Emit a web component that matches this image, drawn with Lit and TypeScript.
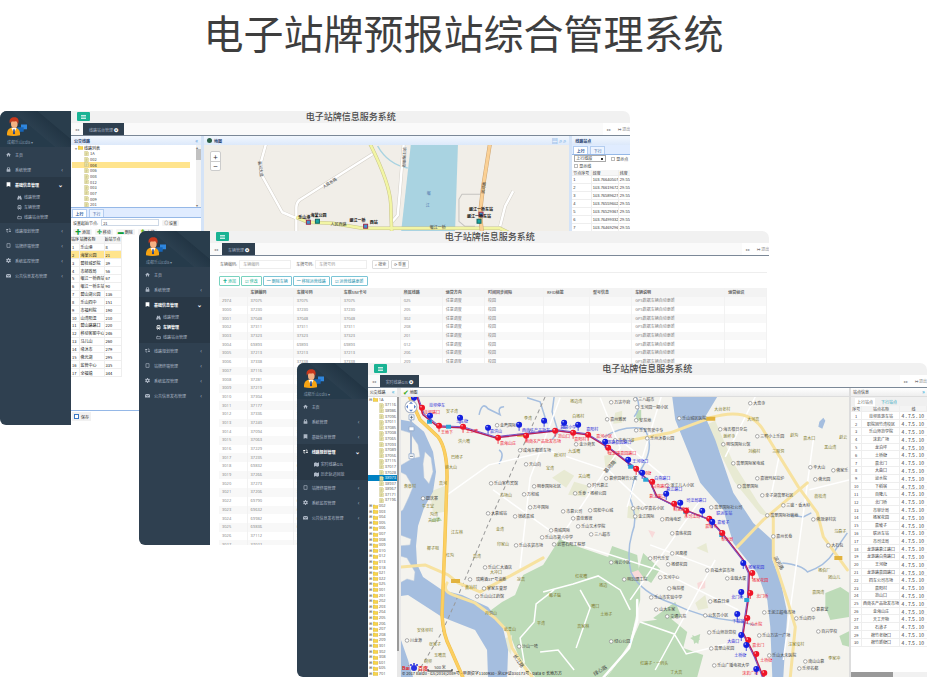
import { LitElement, html, svg, css } from "lit";
import { customElement, property } from "lit/decorators.js";
import { classMap } from "lit/directives/class-map.js";

const base = css`
  * { box-sizing: border-box; }
  button, input, select { font: inherit; color: inherit; margin: 0; padding: 0; border: 0; background: none; min-width: 0; }
  table { border-collapse: collapse; table-layout: fixed; }
  th, td { padding: 0; font-weight: 400; overflow: hidden; white-space: nowrap; line-height: 1; }
  a { color: inherit; text-decoration: none; }
  ul { list-style: none; margin: 0; padding: 0; }
  svg { display: block; }
`;

/* ---------- icons ---------- */
const shapes: Record<string, unknown> = {
  home: svg`<path d="M1 8 8 2l7 6-1.500 1.500L13 9v5H9.500v-4h-3v4H3V9l-.5.5z"/>`,
  lock: svg`<path fill-rule="evenodd" d="M3 7V5a5 4.500 0 0 1 10 0v2h1v8H2V7zm2.500 0h5V5a2.500 2.500 0 0 0-5 0z"/>`,
  book: svg`<path fill-rule="evenodd" d="M2 1h12v14l-6-2-6 2z"/>`,
  route: svg`<path d="M1 3h6v3H4v2L0 5zM15 13H9v-3h3V8l4 3z"/><path d="M3 7v6h4M13 9V3H9" fill="none" stroke="currentColor" stroke-width="2"/>`,
  screen: svg`<path fill="none" stroke="currentColor" stroke-width="2" d="M3 2h10v12H3z"/>`,
  gear: svg`<path fill-rule="evenodd" d="M6.500 0h3l.5 2.500 2 1 2.200-1 1.500 2.500-1.700 1.700v2.600l1.700 1.700-1.500 2.500-2.200-1-2 1-.5 2.500h-3L6 13.500l-2-1-2.200 1L.3 11 2 9.300V6.700L.3 5l1.500-2.500 2.200 1 2-1zM8 5.500a2.500 2.500 0 1 0 0 5 2.500 2.500 0 0 0 0-5z"/>`,
  mail: svg`<path d="M0 3h16l-8 6zM0 5l8 6 8-6v9H0z"/>`,
  road: svg`<path d="M4 2h3v3h2V2h3l4 12H9v-4H7v4H0z"/>`,
  bus: svg`<path fill-rule="evenodd" d="M4 1h8l2 3v9h-2v2h-2v-2H6v2H4v-2H2V4zm0 3v4h8V4zm0 6v2h2v-2zm6 0v2h2v-2z"/>`,
  sign: svg`<path fill="none" stroke="currentColor" stroke-width="2" d="M2 5h12v7H2zM5 5V2"/>`,
  map: svg`<path d="M0 3l5-2 6 2 5-2v12l-5 2-6-2-5 2z"/>`,
};
const icon = (n: string) => html`<svg class="ico" viewBox="0 0 16 16" fill="currentColor" aria-hidden="true">${shapes[n]}</svg>`;

const avatar = html`<svg class="avatar" viewBox="0 0 60 56" aria-hidden="true">
  <path d="M42 22h18v14H50l-4 4v-4h-4z" fill="#2f86dd"/><path d="M31 30h19v14H40l-5 5v-5h-4z" fill="#1765b8"/>
  <path d="M0 54c-1-16 8-22 16-22h8c9 0 16 8 15 22-12 3-28 3-39 0z" fill="#f7a413"/>
  <path d="M13 32l8 16 8-16z" fill="#fff"/><path d="M19 36h4l1 12-3 4-3-4z" fill="#26468a"/>
  <ellipse cx="22" cy="20" rx="10" ry="13" fill="#f5b183"/>
  <path d="M9 20C4 5 14 0 22 0c11 0 16 8 11 21-1-6-3-8-7-9-6 2-10 0-12 1-3 1-4 4-5 7z" fill="#c9381c"/></svg>`;

/* ---------- window frame with side navigation ---------- */
type Item = { icon: string; label: string; children?: [string, string][] };
const groups: Item[] = [
  { icon: "home", label: "主页" },
  { icon: "lock", label: "系统管理" },
  { icon: "book", label: "基础信息管理", children: [["road", "线路管理"], ["bus", "车辆管理"], ["sign", "线路站台管理"]] },
  { icon: "route", label: "线路规划管理", children: [["map", "实时线路GIS"], ["map", "历史轨迹回放"]] },
  { icon: "screen", label: "站牌终端管理" },
  { icon: "gear", label: "系统监控管理" },
  { icon: "mail", label: "公共信息发布管理" },
];

@customElement("admin-window")
export class AdminWindow extends LitElement {
  @property() tab = "";
  @property() group = "";
  @property() current = "";

  static styles = [base, css`
    :host { display: flex; overflow: hidden; border-radius: 7px 7px 0 6px; background: #fff; color: #333; font: 4px/1 "Noto Sans CJK SC", sans-serif; }
    nav { flex: none; width: 71px; background: #2f4050; color: #acb6c4; }
    .profile { height: 36px; padding: 6px 7px 0; background: linear-gradient(40deg, #263b4b 48%, #2b3f4f 49%, #223544 70%, #293d4c 71%); }
    .avatar { width: 20px; height: 19px; }
    .profile p { margin: 4px 0 0; color: #8296aa; white-space: nowrap; }
    .ico { width: 5px; height: 5px; flex: none; }
    .entry { display: flex; align-items: center; gap: 4px; height: 15px; padding: 0 8px 0 6px; white-space: nowrap; }
    .entry .arrow { margin-left: auto; font-size: 6px; }
    .open { background: #293846; padding-bottom: 1px; }
    .open > .entry { color: #fff; font-weight: 700; }
    .sub a { display: flex; align-items: center; gap: 2px; height: 10px; padding-left: 17px; white-space: nowrap; }
    .sub a.on { color: #fff; font-weight: 700; }
    main { flex: 1; min-width: 0; display: flex; flex-direction: column; }
    header { flex: none; height: 12px; display: grid; grid-template-columns: 1fr auto 1fr; background: #f1f1f1; }
    .menu { width: 13px; height: 9px; margin: 1px 0 0 6px; background: #1ab394; border-radius: 1px; display: grid; place-items: center; color: #fff; }
    .menu svg { width: 5px; height: 4px; }
    h2 { margin: 0; font-size: 9px; line-height: 11px; font-weight: 500; color: #4b4b4b; }
    .tabs { flex: none; height: 13px; display: flex; background: #fafafa; border-bottom: 1px solid #7b8897; color: #888; }
    .tabs button { padding: 0 4px; }
    .tabs .active { background: #2f4050; color: #a7b1c2; padding: 0 6px; white-space: nowrap; }
    .tabs b { color: #fff; font-size: 5px; }
    .tabs .next { margin-left: auto; background: #fff; }
    .tabs .exit { width: 15px; background: #fff; white-space: nowrap; overflow: hidden; padding: 0 0 0 3px; text-align: left; }
    .body { flex: 1; min-height: 0; display: flex; }
    ::slotted(*) { flex: 1; min-width: 0; }
  `];

  render() {
    return html`
      <nav>
        <div class="profile">${avatar}<p>成都乐山cdls ▾</p></div>
        <ul>${groups.map((g) => {
          const open = g.label === this.group;
          return html`<li class=${classMap({ open })}>
            <a class="entry" href="#">${icon(g.icon)}<span>${g.label}</span>${g.icon === "home" ? "" : html`<span class="arrow">${open ? "⌄" : "‹"}</span>`}</a>
            ${open ? html`<ul class="sub">${g.children!.map(([i, l]) => html`<li><a href="#" class=${classMap({ on: l === this.current })}>${icon(i)}${l}</a></li>`)}</ul>` : ""}
          </li>`;
        })}</ul>
      </nav>
      <main>
        <header>
          <button class="menu" aria-label="菜单"><svg viewBox="0 0 10 8"><path d="M0 1h10M0 4h10M0 7h10" stroke="#fff" stroke-width="1.500"/></svg></button>
          <h2>电子站牌信息服务系统</h2>
        </header>
        <div class="tabs">
          <button aria-label="上一个">◂◂</button><button class="active">${this.tab} <b>✪</b></button>
          <button class="next" aria-label="下一个">▸▸</button><button class="exit">↦ 退出</button>
        </div>
        <div class="body"><slot></slot></div>
      </main>`;
  }
}

/* ---------- small map helpers ---------- */
type Label = [number, number, string];
const labels = (cls: string, list: Label[]) => list.map(([x, y, t]) => svg`<text class=${cls} x=${x} y=${y}>${t}</text>`);

/* ---------- stop management ---------- */
const stops: [string, number][] = [["乐山港", 8], ["海棠公园", 21], ["碧桂城影院", 39], ["市邮政局", 56], ["岷江一桥西站", 67], ["岷江一桥东站", 90], ["碧山湖公园", 136], ["乐山四中", 151], ["市福利院", 190], ["山湾阳温", 210], ["碧山路路口", 220], ["移动客服中心", 246], ["马儿山", 260], ["缘沐市", 279], ["佛光湖", 295], ["监管中心", 335], ["全福镇", 344]];
const points = ["103.76640507", "103.76619672", "103.76589627", "103.76559602", "103.76529367", "103.76499332", "103.76469296"];
const leaf = svg`<path d="M2 1h9l3 3v11H2z" fill="#f0ecb4" stroke="#a99c50"/><path d="M5 6h6M5 9h6M5 12h4" stroke="#8c8346"/>`;
const folder = svg`<path d="M0 3h6l2 2h8v9H0z" fill="#f8d64e" stroke="#c9a02c"/>`;

@customElement("stop-editor")
export class StopEditor extends LitElement {
  static styles = [base, css`
    :host { display: grid; grid-template-columns: 130px 1fr 58px; gap: 3px; background: #d4e3f7; }
    section { min-width: 0; min-height: 0; display: flex; flex-direction: column; background: #fff; overflow: hidden; }
    h3 { flex: none; margin: 0; height: 9px; padding: 0 3px; display: flex; align-items: center; gap: 2px; background: linear-gradient(#f2f7fe, #dce9fa); font-size: 4px; font-weight: 700; color: #24406c; }
    h3 .end { margin-left: auto; color: #4f95d8; font-weight: 400; font-size: 6px; }
    .globe { width: 5px; height: 5px; border-radius: 50%; background: #2a6048; }
    .treebox { flex: none; height: 63px; display: flex; border-bottom: 1px solid #95b8e7; }
    .tree { flex: 1; display: flex; flex-direction: column; }
    .tree li { flex: 1; min-height: 0; display: flex; align-items: center; gap: 1px; margin: 0 6px 0 1px; padding-left: 12px; color: #444; }
    .tree li:first-child { padding-left: 3px; color: #222; }
    .tree li.on { background: #ffe48d; color: #222; }
    .tree svg { width: 5px; height: 5px; }
    .bar { width: 5px; background: #f1f1f1; font-size: 4px; display: flex; flex-direction: column; justify-content: space-between; color: #777; }
    .thumb { height: 11px; background: #c1c1c1; margin-bottom: auto; }
    .tabs { flex: none; height: 10px; padding: 1px 1px 0; display: flex; gap: 2px; background: #e0ecff; border-bottom: 1px solid #95b8e7; }
    .tabs button { width: 15px; border: 1px solid #b3cdf0; border-bottom: 0; background: #edf4ff; color: #2a5b9a; line-height: 1; }
    .tabs .on { background: #fff; font-weight: 700; }
    .line { flex: none; height: 9px; display: flex; align-items: center; gap: 3px; padding: 0 2px; white-space: nowrap; }
    .line input { width: 58px; height: 7px; border: 1px solid #cdd8e6; padding: 0 1px; }
    .line button { background: #f4f4f4; border-radius: 1px; padding: 1px 2px; }
    .line b { font-size: 6px; line-height: 4px; }
    .line .g { color: #0e9c38; }
    .line .r { color: #6bbd27; }
    .stops { flex: none; width: 50px; height: 141px; text-align: left; color: #111; }
    .stops th, .stops td { border: 1px solid #eee; border-width: 0 1px 1px 0; padding-left: 1px; }
    .stops th { background: #f6f6f6; padding: 0; }
    .stops tr.on { background: #ffe48d; }
    .save { margin-top: auto; flex: none; height: 15px; border-top: 1px solid #95b8e7; padding: 1px 1px; }
    .save button { height: 9px; padding: 0 2px; background: #f1f1f1; display: flex; align-items: center; gap: 2px; }
    .save i { width: 5px; height: 5px; background: #fff; border: 1px solid #3a78c6; }
    .map { position: relative; flex: 1; min-height: 0; }
    .map svg { width: 100%; height: 100%; background: #f1eee8; }
    .zoom { position: absolute; left: 6px; top: 6px; display: grid; width: 11px; border: 1px solid #ccc; border-radius: 2px; background: #fff; }
    .zoom button { height: 9px; line-height: 8px; font-size: 8px; }
    .zoom button + button { border-top: 1px solid #ccc; }
    text { font-size: 4px; fill: #333; text-anchor: middle; }
    text.s { font-weight: 700; fill: #111; }
    text.v { fill: #4d6faa; }
    .checks { flex: none; height: 15px; display: flex; flex-wrap: wrap; align-items: center; gap: 0 5px; padding-left: 2px; overflow: hidden; }
    .checks select { appearance: none; width: 32px; height: 7px; border: 1px solid #aaa; padding-left: 1px; line-height: 5px; background: linear-gradient(#333 0 0) 26px 2px / 2px 2px no-repeat; }
    .checks label { display: flex; align-items: center; gap: 1px; height: 7px; white-space: nowrap; }
    .checks input { appearance: none; width: 4px; height: 4px; border: 1px solid #bbb; }
    .pts { flex: none; width: 70px; height: 62px; text-align: left; }
    .pts th, .pts td { border-right: 1px solid #eee; border-bottom: 1px solid #eee; padding-left: 1px; }
    .pts td { font: 4px "Liberation Sans", sans-serif; }
    .pts th { background: #f6f6f6; }
  `];

  render() {
    return html`
      <section>
        <h3>公交线路<span class="end">«</span></h3>
        <div class="treebox">
          <ul class="tree">
            <li>▿<svg viewBox="0 0 16 16">${folder}</svg>线路列表</li>
            ${["1A", "002", "004", "006", "008", "012", "003", "007", "009", "201"].map((t) => html`<li class=${classMap({ on: t === "004" })}><svg viewBox="0 0 16 16">${leaf}</svg>${t}</li>`)}
          </ul>
          <div class="bar"><span>▴</span><span class="thumb"></span><span>▾</span></div>
        </div>
        <div class="tabs"><button class="on">上行</button><button>下行</button></div>
        <div class="line"><label for="node">设置起始节点:</label><input id="node" value="21"><button>◎ 设置</button></div>
        <div class="line"><button><b class="g">✚</b> 添加</button><button><b class="g">✢</b> 移动</button><button><b class="g">▬</b> 删除</button><button><b class="r">⬆</b> 上移</button></div>
        <table class="stops">
          <colgroup><col width="8"><col width="25"><col width="17"></colgroup>
          <tr><th>站序</th><th>站牌名称</th><th>始站节点</th></tr>
          ${stops.map(([n, v], i) => html`<tr class=${classMap({ on: i === 1 })}><td>${i + 1}</td><td>${n}</td><td>${v}</td></tr>`)}
        </table>
        <div class="save"><button><i></i>保存</button></div>
      </section>
      <section>
        <h3><span class="globe"></span>地图<span class="end">▤ ⌕ ⌕</span></h3>
        <div class="map">
          <svg viewBox="205 145 364 280" preserveAspectRatio="xMidYMin slice">
            <path d="M411 145h47l-3 90h-54z" fill="#a9d3e1"/>
            <path d="M378 146q10 18 30 22" fill="none" stroke="#a9d3e1" stroke-width="1.500"/>
            <g fill="none" stroke-linejoin="round">
              <path stroke="#d4d0c9" stroke-width="3.500" d="M267 143l-5 18v13l21 38 14 6M373 154l-73 46q-3 3-3 7v28M404 143l-4 50-2 22-6 7M513 191l-8 15-5 20"/>
              <path stroke="#fff" stroke-width="2.500" d="M267 143l-5 18v13l21 38 14 6M373 154l-73 46q-3 3-3 7v28M404 143l-4 50-2 22-6 7M513 191l-8 15-5 20"/>
              <path stroke="#c5c3c0" d="M482 194h-20l-3 5v22l6 5h10"/>
              <path stroke="#c8c48b" stroke-width="3.500" d="M370 143q20 40 21 60l1 30M297 217l12 5 24 1 30 5h137l12 6"/>
              <path stroke="#f2f5a4" stroke-width="2.500" d="M370 143q20 40 21 60l1 30M297 217l12 5 24 1 30 5h137l12 6"/>
              <path stroke="#cda574" stroke-width="4" d="M490 143l-7 44-3 26 2 20"/><path stroke="#fad095" stroke-width="3" d="M490 143l-7 44-3 26 2 20"/>
            </g>
            <g stroke="#9b3050"><path fill="#3c94d2" d="M307 220h4v4h-4zM364 224h4v4h-4zM479 212h4v4h-4z"/></g>
            <path fill="#17a3a0" stroke="#176862" d="M316 219h4v4h-4zM477 219h4v4h-4z"/>
            ${labels("s", [[305, 219, "乐山港"], [319, 217, "海棠公园"], [358, 222, "岷江一桥"], [374, 224, "西站"], [481, 211, "岷江一桥东站"], [479, 218, "岷江一桥东站"]])}
            ${labels("", [[339, 226, "人民西路"], [438, 229, "岷江一桥"]])}
            <text transform="translate(331 184) rotate(-32)">人民东路</text><text transform="translate(260 169) rotate(82)">嘉州大道</text><text transform="translate(403 157) rotate(93)">滨江路南段</text><text transform="translate(485 188) rotate(-82)">滨河路</text>
            ${labels("v", [[429, 195, "岷"], [428, 207, "江"]])}
          </svg>
          <div class="zoom"><button aria-label="放大">+</button><button aria-label="缩小">−</button></div>
        </div>
      </section>
      <section>
        <h3>线路站点</h3>
        <div class="tabs"><button class="on">上行</button><button>下行</button></div>
        <div class="checks"><select aria-label="线段"><option>上行线段</option></select><label><input type="checkbox">显示点</label><label><input type="checkbox">显示线</label></div>
        <table class="pts">
          <colgroup><col width="19"><col width="27"><col width="24"></colgroup>
          <tr><th>节点序号</th><th>经度</th><th>纬度</th></tr>
          ${points.map((p, i) => html`<tr><td>${i + 1}</td><td>${p}</td><td>29.55</td></tr>`)}
        </table>
      </section>`;
  }
}

/* ---------- vehicle list ---------- */
const codes = "37075 37230 37048 37311 37323 69893 37213 37338 37116 37281 37219 37304 37177 37336 37240 37094 37063 37229 37235 69832 37266 37273 37206 69790 69632 69982 69836 37112 37022".split(" ");
const routes = "025 205 302 208 201 012 206 209".split(" ");
const cols: [string, number][] = [["", 28], ["车辆编码", 46], ["车牌号码", 47], ["车载SIM卡号", 60], ["所属线路", 42], ["运营方向", 42], ["时间同步间隔", 59], ["RFID标签", 46], ["型号信息", 42], ["车辆说明", 93], ["运营标识", 42]];

@customElement("vehicle-list")
export class VehicleList extends LitElement {
  static styles = [base, css`
    :host { display: flex; flex-direction: column; padding: 0 2px 0 9px; color: #808080; overflow: hidden; }
    form { flex: none; height: 17px; display: flex; align-items: center; gap: 2px; padding: 0 1px; border-bottom: 1px solid #eee; color: #666; white-space: nowrap; }
    form input { width: 52px; height: 9px; border: 1px solid #eee; padding: 0 3px; margin-right: 3px; }
    form input::placeholder { color: #999; }
    form button { height: 9px; padding: 0 2px; border: 1px solid #ddd; border-radius: 1px; }
    .actions { flex: none; height: 15px; padding: 3px 0 2px; display: flex; gap: 1px; }
    .actions button { padding: 0 3px; border: 1px solid #7bc5d6; border-radius: 1px; color: #2492ae; white-space: nowrap; line-height: 1; }
    .actions .add { border-color: #79d2bf; color: #1ab394; }
    table { flex: none; width: 100%; height: 261px; text-align: left; font: 4px/1 "Open Sans", "Noto Sans CJK SC", sans-serif; }
    th, td { padding-left: 3px; border: 1px solid #f2f2f2; border-width: 0 1px 0 0; }
    thead tr { background: #f3f3f3; }
    thead th { height: 9px; font-weight: 600; color: #666; }
    tbody tr:nth-child(odd) { background: #f8f8f8; }
    tbody tr:nth-child(even) { background: #fff; }
  `];

  render() {
    return html`
      <form>
        <label for="code">车辆编码:</label><input id="code" placeholder="车辆编码">
        <label for="plate">车牌号码:</label><input id="plate" placeholder="车牌号码">
        <button type="button">⌕ 搜索</button><button type="button">⟳ 重置</button>
      </form>
      <div class="actions"><button class="add">✚ 添加</button><button class="add">☑ 修改</button><button>━ 删除车辆</button><button>━ 移除运营线路</button><button>☑ 运营线路更新</button></div>
      <table>
        <colgroup>${cols.map(([, w]) => html`<col width=${w}>`)}</colgroup>
        <thead><tr>${cols.map(([c]) => html`<th>${c}</th>`)}</tr></thead>
        <tbody>${codes.map((c, i) => html`<tr><td>${i ? 2999 + i : 2974}</td><td>${c}</td><td>${c}</td><td>${c}</td><td>${routes[i % 8]}</td><td>任意调度</td><td>校园</td><td></td><td></td><td>GPS数据车辆自动更新</td><td></td></tr>`)}</tbody>
      </table>`;
  }
}

/* ---------- realtime GIS ---------- */
const busIds = "37116 38986 37096 37011 37085 37008 37065 37093 37089 37056 37115 37017 37028 38973 38937 38967 37171 37196".split(" ");
const lines = "002 003 004 005 006 007 008 009 010 012 013 018 021 022 025 001 201 202 203 204 205 206 207 208 209 301 302 308 601 605 701".split(" ");
const stations = "肖坝旅游车站 职院旭竹湾校区 乐山师范学院 沫若广场 龙泊坪 土桥街 嘉北门 大曲口 泌水院 下稻宿 百隆儿 北门桥 市审计局 杨家花园 嘉坡子 联运车站 市司法局 龙游路慕江路口 龙游路白燕路口 王河街 龙游路嘉园路口 四车公司市场 嘉阳村 范山口 西南农产品批发市场 金海山庄 天工开物 石道子 棉竹老街口 棉竹新街口".split(" ");
const blue = [[414, 398], [430, 416], [460, 418], [488, 428], [519, 425], [544, 421], [564, 423], [578, 425], [605, 442], [628, 460], [642, 473], [666, 494], [680, 503], [702, 511], [712, 522], [743, 563], [741, 592], [737, 614], [741, 635], [746, 645], [756, 669]];
const red = [[422, 408], [439, 426], [463, 427], [498, 438], [526, 436], [555, 431], [573, 433], [588, 435], [608, 448], [636, 469], [652, 482], [674, 504], [686, 511], [709, 519], [722, 533], [752, 573], [750, 593], [747, 618], [748, 640], [756, 654], [764, 673]];
const villages: Label[] = [[452, 413, "安子湾"], [464, 443, "洪六嘴"], [457, 459, "巴椅子"], [451, 469, "熊大山"], [410, 488, "詹蔡村"], [443, 485, "高河"], [428, 508, "牛王堂"], [434, 516, "沟湾"], [434, 522, "关山子"], [457, 534, "江左林"], [500, 531, "金湾"], [433, 550, "椰子咀"], [450, 557, "红沟"], [477, 558, "高湾"], [503, 546, "印家山"], [496, 574, "大冲口"], [521, 581, "凉高"], [471, 589, "黄冶村"], [491, 615, "月洞山"], [510, 631, "武善山"], [425, 632, "安体坝村"], [435, 646, "张家子"], [440, 657, "玉嘴高"], [428, 663, "胡坝"], [576, 403, "杨边湾"], [528, 420, "李湾"], [578, 418, "白杨村"], [574, 453, "九溪嘴"], [560, 457, "棉河村"], [550, 470, "宝湾"], [584, 478, "关山嘴"], [506, 497, "马场山"], [581, 578, "红花嘴"], [603, 587, "杨边"], [555, 597, "甄子脑"], [595, 608, "嘴口"], [606, 616, "土地子"], [583, 628, "高家林"], [541, 625, "平湾"], [654, 665, "红路子·一码头"], [676, 674, "丁大高"], [722, 411, "大台老村"], [753, 421, "大河高"], [729, 438, "谢杯寺"], [754, 453, "刘稿村"], [778, 453, "三眼洞"], [794, 437, "赵沟"], [809, 440, "嘉木口"], [830, 449, "黑山湾"], [820, 498, "荔枝湾"], [840, 533, "乌森子"], [824, 572, "杨伯厂"], [834, 579, "团山儿"], [818, 594, "嘉国湾"], [796, 646, "汪家坟村"], [834, 660, "李家冲"], [843, 439, "赵云"]];
const places: Label[] = [[432, 500, "圆庆寨"], [508, 427, "金鹰国际"], [622, 404, "万达华府"], [646, 401, "三八超市"], [654, 409, "玉河园一期小区"], [618, 421, "嘉州雅居"], [645, 422, "安苑地"], [694, 420, "乐山城区医院"], [651, 432, "乐安驾驶中专"], [662, 440, "乐州沐春公园"], [626, 442, "市泰门诊"], [587, 446, "金沙商务"], [537, 452, "成海东都新车场"], [535, 466, "天山向"], [506, 485, "乐山客竹宾馆"], [549, 488, "明泰国际社区"], [600, 487, "时代慕江"], [623, 480, "慕修园餐饮公寓"], [533, 496, "万和城"], [592, 495, "乐泰·杨柳公园"], [541, 509, "万年国际"], [574, 513, "市慕公司"], [603, 512, "瑞松中心城"], [499, 515, "大慕城站"], [526, 518, "锦绣嘉城"], [584, 520, "嘉佳雅锦"], [650, 510, "中心学嘉名小区"], [646, 518, "金江国际"], [682, 487, "湛江儿人小区"], [593, 528, "乐山艺术学院"], [562, 532, "燕城国际"], [602, 536, "三八超市"], [559, 539, "乐山市第六中学"], [571, 546, "武警石阳工程部"], [673, 521, "四海电影"], [683, 535, "嘉练花园"], [681, 555, "凤凰楼"], [661, 560, "时代乐安"], [622, 564, "海云小区"], [679, 566, "杨健花园"], [671, 579, "艺河中心"], [637, 581, "明玩理工院"], [722, 572, "百福虎贸市场"], [738, 580, "金融大厦"], [678, 590, "梅苑楼"], [668, 599, "乐山市实验中学"], [667, 611, "山大东家"], [678, 618, "交通兴苑"], [721, 603, "杨森日港"], [718, 617, "公务员小区"], [724, 634, "乐山师范党校"], [724, 650, "翡翠山花园"], [733, 667, "乐山广播电视大学"], [776, 637, "乐山万达一广场"], [784, 657, "乐山大未医院"], [759, 405, "大恋寺"], [735, 431, "海吉根日杂岛"], [738, 446, "明珠国际公馆"], [772, 438, "三鸭小上乐园"], [750, 465, "翡翠国际家电城"], [772, 480, "嘉锦玛尼拉炉"], [750, 488, "翡翠国际"], [779, 497, "幸子湖翡翠社区"], [798, 507, "三盛·香木岭"], [728, 509, "翡翠国际社公司"], [784, 517, "翡翠国际社玻地"], [826, 521, "佛顶津村店"], [784, 538, "嘉州长卷"], [837, 547, "大石包"], [819, 469, "辛大山"], [824, 481, "佛光园"], [842, 472, "佛家乐"], [781, 614, "王泥江超电市场"], [807, 620, "乐山四中"], [829, 633, "百兴学校"], [822, 611, "慕慕堂"], [816, 663, "南山山慕"], [810, 670, "乐坝名都"], [500, 569, "乐山仁大酒店"], [491, 581, "瑞腾酒37*号油舱"], [497, 590, "掌家东皇部"], [492, 598, "乐山山江药馆"], [416, 642, "川龙源"], [530, 648, "沙山一哈"], [531, 547, "乐山农贸市场"], [622, 643, "绿心公园"]];
const blueStops: Label[] = [[437, 407, "肖坝停车"], [462, 423, "土主街"], [496, 433, "嘉洪山"], [536, 432, "西南农产品批发"], [568, 429, "慕慕小学"], [592, 431, "嘉阳村"], [617, 444, "龙游路嘉园路口"], [640, 463, "王河街口"], [662, 480, "白燕路口"], [674, 491, "慕江路口"], [696, 502, "司法局路口"], [724, 515, "联运车站"], [723, 524, "嘉坡子"], [756, 569, "杨家花园"], [737, 599, "北门桥"], [738, 623, "下稻宿"], [733, 643, "大曲口"], [740, 657, "土桥街"]];
const redStops: Label[] = [[432, 414, "肖坝路口"], [447, 434, "王地下"], [472, 433, "王土嘴"], [508, 445, "嘉海山庄"], [543, 443, "西南农产品批发市场"], [564, 438, "范山口"], [580, 441, "嘉阳村"], [604, 438, "嘉河小区"], [622, 455, "龙游路嘉园路口"], [645, 475, "王河街"], [660, 488, "白燕路口"], [657, 498, "慕江路口"], [681, 511, "百富路口"], [692, 518, "市司法局"], [711, 528, "嘉坡子"], [727, 541, "审计局"], [760, 582, "杨家花园"], [762, 598, "北门桥"], [756, 626, "沁水院"], [758, 647, "嘉北门"], [766, 662, "土桥街"], [750, 675, "沫若广场"]];

@customElement("gis-view")
export class GisView extends LitElement {
  static styles = [base, css`
    :host { display: grid; grid-template-columns: 29px 4px 1fr 78px; overflow: hidden; }
    section { min-width: 0; min-height: 0; display: flex; flex-direction: column; overflow: hidden; background: #fff; }
    h3 { flex: none; height: 9px; margin: 0; padding: 0 2px; display: flex; align-items: center; gap: 1px; background: linear-gradient(#fff, #eee); border-bottom: 1px solid #ddd; font-size: 4px; font-weight: 400; color: #333; white-space: nowrap; }
    h3 .end { margin-left: auto; color: #18a8d8; font-size: 6px; }
    h3 .ok { color: #38a915; font-size: 7px; }
    .tree { flex: 1; min-height: 0; display: flex; flex-direction: column; color: #555; font: 4px/1 "Open Sans", sans-serif; }
    .tree li { flex: 1; min-height: 0; display: flex; align-items: center; gap: 1px; padding-left: 1px; }
    .tree .leaf { padding-left: 11px; }
    .tree .on { background: #0081c2; color: #fff; }
    .tree svg { width: 5px; height: 5px; flex: none; }
    .split { background: linear-gradient(#9a9a9a 0 0) 0 9px / 2px 254px no-repeat #e8e8e8; }
    .map { position: relative; flex: 1; min-height: 0; }
    .map svg { width: 100%; height: 100%; background: #f4f3ee; }
    text { font-size: 4px; text-anchor: middle; fill: #444; }
    text.v { fill: #7f7a2c; }
    text.b { fill: #2727d7; }
    text.r { fill: #ee2034; }
    text.n { text-anchor: start; fill: #222; }
    text.logo { text-anchor: start; fill: #e0201b; font-weight: 700; font-size: 5px; }
    text.road { font-size: 5px; }
    .info { border-left: 2px solid #ddd; }
    .tabs { flex: none; height: 9px; display: flex; background: #f0f0f0; padding: 1px 4px 0; gap: 4px; }
    .tabs button { padding: 0 2px; color: #18a0ba; line-height: 1; }
    .tabs .on { background: #fff; color: #555; }
    .info table { flex: none; width: 100%; height: 241px; color: #444; text-align: center; }
    .info th, .info td { border-right: 1px solid #eee; border-bottom: 1px solid #eee; }
    .info th { background: #f4f4f4; }
    .info td:last-child { text-align: left; padding-left: 1px; border-right: 0; font-size: 5px; }
    .scroll { margin-top: auto; flex: none; height: 5px; background: linear-gradient(#999 0 0) 0 0 / 42px 5px no-repeat #f1f1f1; }
  `];

  private pin(x: number, y: number, c: string) {
    return svg`<path d=${`M${x} ${y}v6`} stroke=${c} stroke-width=".8"/><circle cx=${x} cy=${y} r="3" fill=${c}/><circle cx=${x - 1} cy=${y - 1} r=".8" fill="#fff" opacity=".7"/>`;
  }

  render() {
    return html`
      <section>
        <h3>公交线路<span class="end">«</span></h3>
        <ul class="tree">
          <li>⊟<svg viewBox="0 0 16 16">${folder}</svg>1A</li>
          ${busIds.map((b) => html`<li class=${classMap({ leaf: true, on: b === "38973" })}><svg viewBox="0 0 16 16">${leaf}</svg>${b}</li>`)}
          ${lines.map((l) => html`<li>⊞<svg viewBox="0 0 16 16">${folder}</svg>${l}</li>`)}
        </ul>
      </section>
      <div class="split"></div>
      <section>
        <h3><span class="ok">✔</span>地图</h3>
        <div class="map"><svg viewBox="401 397 448 280" preserveAspectRatio="xMinYMax slice">
          <g fill="#bddbb8">
            <path d="M543 565l17-27 13 7 35 12 4-11 25 9 3 25v20l-4 15-6 27-23 35h-72l-17-22-10-25-13-12-8-5 15-11 13-7 8-20z"/>
            <path d="M640 622l30-4 17 14-4 16 20 7-6 22h-90l23-32zM643 553l17 16-9 14-14-9zM653 618l22-16 6 14-20 6zM825 593l15-6 9 6v24l-19 3-5-13zM849 631l-10 5 3 9 7 2zM692 635l8 4-6 5zM430 520l9-3 3 4-10 1zM636 411l5-1v11h-5zM690 638l10-4-2 10z"/>
          </g>
          <g fill="#e8ead3">
            <path d="M430 492l15-6v26l-12 2zM552 478l12-8 10 6-8 12zM604 456l10-2 3 10-12 3zM615 413l7-2v12l-9 1zM628 506l12 4-3 10-10-2zM706 425l9-4 18 42 25 40 12 15-10-4-26-32zM773 590l5 3 2 14-5-4zM574 482l14 4-3 11-17-2zM695 603l10-8 3 13-10 2zM696 548l10-5 2 10zM502 640l10-5-1 20z"/>
          </g>
          <path fill="#f8dada" d="M630 573l8-3 5 7-8 4zM697 583l8-3v8l-7 2zM648 530l7 2-3 6z"/>
          <g fill="#a5bedf">
            <path d="M401 420l11 2 12 10 9 20 3 20-3 20-9 16-6 18-2 20 1 18 6 13 19 13 20 5 26 12 14 17 6 26-1 29h-19l-1-29-12-20-33-13-34-22-7 1z"/>
            <path d="M672 397h45l-12 20 10 23 18 53 20 30 19 17v20l8 20 7 33-4 64h-11l-2-50-3-27-10-27-24-30-10-33-23-27-10-26-15-37z"/>
            <path d="M401 640l7 20 5 17h-12zM819 422l4-4 2 3-3 8-4-2z"/>
          </g>
          <path fill="#f4f3ee" stroke="#bccbdd" stroke-width=".5" d="M400 430l10 3 8 12 2 12-8 2-12 7zM400 472l6 3 7 12-4 10-6 13-3 2zM425 452l6 6 2 14-4 12-5-6-1-14zM400 535l11 4-1 6-10 1zM400 556l7 2 8 14-1 9-7-2-7 4z"/>
          <g fill="none" stroke="#a5bedf" stroke-width="1.500">
            <path d="M527 398l13 4 7 22M554 397l-2 15 6 20-6 8M479 415q3-14 9-6l12 6q-3-8 4-8M499 450q6 4 0 14M782 563q20 2 25 9 18-6 26-19l14-20M636 397q6 10-2 20M604 437q20-12 40-8 14 20-10 50l-4 20q8 20 2 34-6 20-1 40 10 20 40 30 30 15 64 18l20 4M788 515l15 2 8-4"/>
          </g>
          <g fill="none" stroke="#fff" stroke-width="1.500">
            <path d="M447 495l42-30 60-14 60 20 40 38M493 490l70 50 95 30 80 40M560 398l-30 80-10 90M600 398l20 50-60 90M543 592l30-8 25-8 22 14 10 20M514 677l10-15-4-24 14-16 2-18 18-14M540 652l18-2 16 20M640 622l34 12 12 20 40-10M700 500l-70 100M620 440l60 50M650 545l80 30M715 560l-60 110M755 397l-30 60M780 450l-10 50M813 440l-30 220M849 480l-40 10M580 590l10 18-14 40M661 397l-34 110"/>
          </g>
          <path d="M545 397l-58 130-32 76-13 29-24 40" fill="none" stroke="#999" stroke-dasharray="4 3"/>
          <g fill="none" stroke-linejoin="round" stroke-linecap="round">
            <path stroke="#f7e2a0" stroke-width="3" d="M401 567l24-2 23 10 10 8 22 9 32-17 31-17M447 583q-5 8 6 12l22 8 20 15 13 14 4 16 13 20 7 9M633 440l37-7 40-15q40-12 54 14l34 55 19 26 6 24 24 33M737 547l26-27 44-37M773 517v40l14 43 8 27-5 50"/>
            <path stroke="#eebf4c" stroke-width="3.500" d="M409 396l11 24 18 17q9 12 9 40l-2 60-3 78q1 20 8 33l14 32"/><path stroke="#fccf61" stroke-width="2.500" d="M409 396l11 24 18 17q9 12 9 40l-2 60-3 78q1 20 8 33l14 32"/>
            <path stroke="#fff" stroke-width="2.500" d="M637 600v20l-8 28-28 32"/>
          </g>
          <g fill="#e2b33e"><path d="M451 579h9v4h-9zM706 417h9v4h-9zM834 556h8v4h-8zM517 434h8v3h-8z"/></g>
          ${labels("v", villages)}
          ${places.map(([x, y, t]) => svg`<circle cx=${x - t.length * 2 - 3} cy=${y - 1.5} r="1.800" fill="#fff" stroke="#888" stroke-width=".7"/><text x=${x} y=${y}>${t}</text>`)}
          <text class="road" transform="translate(611 468) rotate(-50)">慕河路</text><text class="road" transform="translate(777 564) rotate(60)">滨河路</text><text class="road" transform="translate(517 662) rotate(55)">长江路</text><text class="road" transform="translate(601 672) rotate(-32)">绿心路</text>
          <path fill="none" stroke="#b91f58" stroke-width="1.500" d="M417 397l6 18 15 12 24 1 33 10 62-7 30 4 20 12 26 20 17 15 7 15 20 10 33 13 12 13 21 27 6 13-1 27-5 33 12 24 8 20"/>
          <path fill="none" stroke="#7753c3" d="M418 397l6 17 15 12 24 1 32 10 62-7 30 4 20 12 26 20 17 17 6 14 20 10 33 13 12 13 21 27 6 13-1 27-5 33 12 24 8 20"/>
          <g fill="#2ba4d6"><path d="M427 420h5v4h-5zM446 425h5v4h-5zM628 465h5v4h-5zM643 478h5v4h-5zM719 533h4v4h-4zM744 598h5v4h-5zM683 510h5v4h-5z"/></g>
          ${labels("b", blueStops)}${labels("r", redStops)}
          ${red.map(([x, y]) => this.pin(x, y, "#ef1527"))}${blue.map(([x, y]) => this.pin(x, y, "#1420df"))}
          <circle cx="411" cy="407" r="6" fill="#fff" stroke="#aab3c3"/><path d="M411 402l2 2h-4zM411 412l2-2h-4zM406 407l2-2v4zM416 407l-2-2v4z" fill="#5c83cb"/>
          <path d="M411 418v37" stroke="#a9bbd6" stroke-width="2"/><path d="M409 415h5v5h-5zM409 427h5v4h-5zM409 454h5v5h-5z" fill="#fff" stroke="#8da5c8" stroke-width=".8"/><path d="M410 417.500h3M411.500 416v3M410 456.500h3" stroke="#456" stroke-width=".7"/>
          <text class="logo" x="402" y="670">Bai</text><circle cx="414" cy="668" r="3" fill="#2932e1"/><circle cx="411" cy="665" r="1" fill="#2932e1"/><circle cx="414" cy="664" r="1" fill="#2932e1"/><circle cx="417" cy="665" r="1" fill="#2932e1"/><text class="logo" x="418" y="670">百度</text>
          <text x="440" y="669">500 米</text><path d="M428 669v2h24v-2" fill="none" stroke="#222"/>
          <text class="n" x="402" y="675">© 2017 Baidu - GS(2016)2089号 - 甲测资字1100930 - 京ICP证030173号 - Data © 长地万方</text>
        </svg></div>
      </section>
      <section class="info">
        <h3>站点信息<span class="end">»</span></h3>
        <div class="tabs"><button class="on">上行站点</button><button>下行站点</button></div>
        <table>
          <colgroup><col width="11"><col width="38"><col width="27"></colgroup>
          <tr><th>序号</th><th>站点名称</th><th>线</th></tr>
          ${stations.map((s, i) => html`<tr><td>${i + 1}</td><td>${s}</td><td>4 . 7.5 . 10</td></tr>`)}
        </table>
        <div class="scroll"></div>
      </section>`;
  }
}

/* ---------- page ---------- */
@customElement("app-root")
export class AppRoot extends LitElement {
  static styles = [base, css`
    :host { display: block; background: #fff; overflow: hidden; font-family: "Noto Sans CJK SC", sans-serif; }
    h1 { margin: 0 0 47px; font-size: 40px; line-height: 64px; font-weight: 400; color: #3e3e3e; text-align: center; }
    .stage { position: relative; height: 566px; }
    admin-window { position: absolute; width: 68%; height: 314px; }
    .first { left: 0; top: 0; }
    .second { left: 15%; top: 120px; }
    .third { left: 32%; top: 252px; }
  `];

  render() {
    return html`
      <h1>电子站牌预报站综合管理系统</h1>
      <div class="stage">
        <admin-window class="first" tab="线路站台管理" group="基础信息管理"><stop-editor></stop-editor></admin-window>
        <admin-window class="second" tab="车辆管理" group="基础信息管理" current="车辆管理"><vehicle-list></vehicle-list></admin-window>
        <admin-window class="third" tab="实时线路GIS" group="线路规划管理"><gis-view></gis-view></admin-window>
      </div>`;
  }
}
